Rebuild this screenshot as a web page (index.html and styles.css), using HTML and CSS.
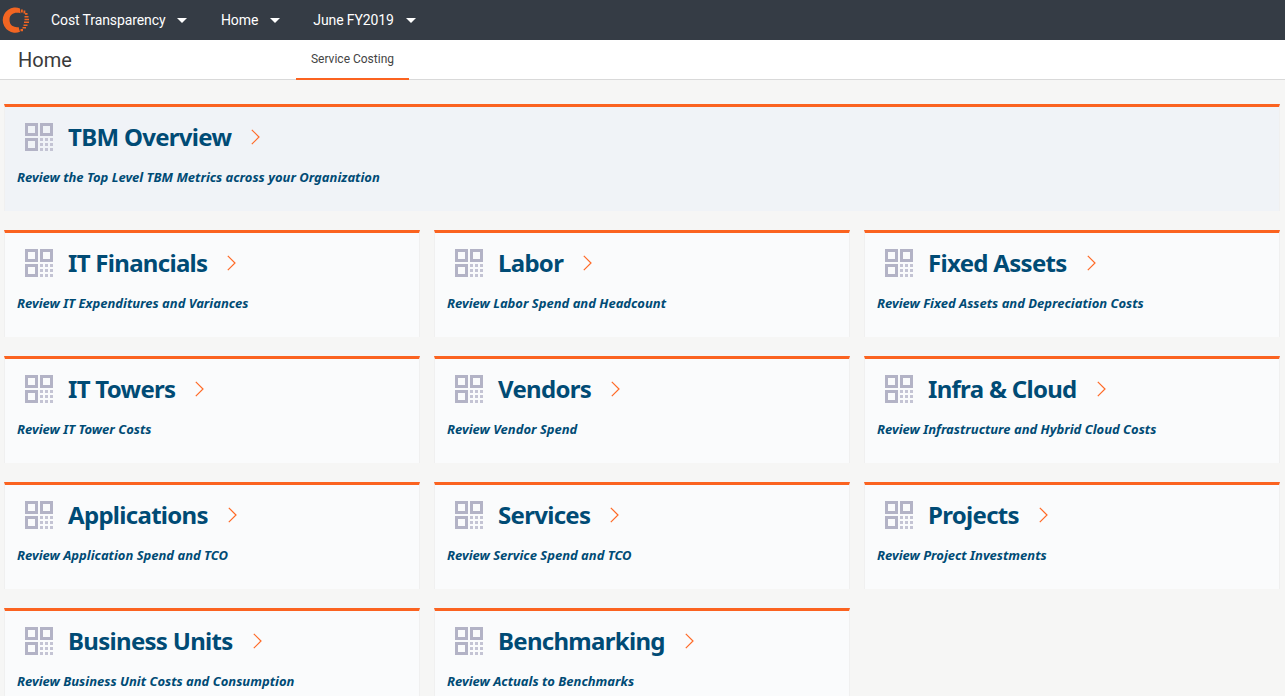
FILE: index.html
```html
<!DOCTYPE html>
<html lang="en">
<head>
<meta charset="utf-8">
<title>Home</title>
<link rel="stylesheet" href="styles.css">
</head>
<body>
<svg class="defs" width="0" height="0" aria-hidden="true">
  <symbol id="grid" viewBox="0 0 28 28">
    <path fill="#b3b3c6" fill-rule="evenodd" d="M0 0h13v13H0zM3 3v7h7V3zM15 0h13v13H15zM18 3v7h7V3zM0 15h13v13H0zM3 18v7h7v-7z"/>
    <path fill="#c4c4d4" d="M15 15h3v3h-3zM20 15h3v3h-3zM25 15h3v3h-3zM15 20h3v3h-3zM20 20h3v3h-3zM25 20h3v3h-3zM15 25h3v3h-3zM20 25h3v3h-3zM25 25h3v3h-3z"/>
  </symbol>
  <symbol id="chev" viewBox="0 0 9 16">
    <path fill="none" stroke="#ff6a26" stroke-width="1.200" d="M0.800 0.800l7.200 7.200-7.200 7.200"/>
  </symbol>
</svg>
<header class="topbar">
  <svg class="logo" viewBox="0 0 30 30" width="30" height="30" aria-hidden="true">
    <path fill="#f26522" d="M19 3.400A12.600 12.600 0 1 0 19 26.800L17.500 22C15 22.800 8.500 21.500 8.500 15S14 7 19.500 8.300z"/>
    <path fill="#f26522" d="M20 4.500h1.800v3H20zM22.500 5.500h1.800v3h-1.800zM24 8h2.500v1.800H24zM23.500 11h4v1.600h-4zM23.500 13.800h4.500v1.400h-4.500zM23 16.500h5v1.400h-5zM22.500 19.500h4v1.600h-4zM21.500 22h3.500v1.600h-3.500zM19.500 24h2.500v2.200h-2.500z"/>
  </svg>
  <nav class="mainnav">
    <a class="navitem navitem-a">Cost Transparency<i class="caret"></i></a>
    <a class="navitem navitem-b">Home<i class="caret"></i></a>
    <a class="navitem">June FY2019<i class="caret"></i></a>
  </nav>
</header>
<div class="subbar">
  <h1 class="pagetitle">Home</h1>
  <div class="tab">Service Costing</div>
</div>
<main class="content">
  <section class="card card-wide">
    <div class="cardhead"><svg class="gridicon"><use href="#grid"/></svg><h2>TBM Overview</h2><svg class="chev"><use href="#chev"/></svg></div>
    <p>Review the Top Level TBM Metrics across your Organization</p>
  </section>
  <section class="card">
    <div class="cardhead"><svg class="gridicon"><use href="#grid"/></svg><h2>IT Financials</h2><svg class="chev"><use href="#chev"/></svg></div>
    <p>Review IT Expenditures and Variances</p>
  </section>
  <section class="card">
    <div class="cardhead"><svg class="gridicon"><use href="#grid"/></svg><h2>Labor</h2><svg class="chev"><use href="#chev"/></svg></div>
    <p>Review Labor Spend and Headcount</p>
  </section>
  <section class="card">
    <div class="cardhead"><svg class="gridicon"><use href="#grid"/></svg><h2>Fixed Assets</h2><svg class="chev"><use href="#chev"/></svg></div>
    <p>Review Fixed Assets and Depreciation Costs</p>
  </section>
  <section class="card">
    <div class="cardhead"><svg class="gridicon"><use href="#grid"/></svg><h2>IT Towers</h2><svg class="chev"><use href="#chev"/></svg></div>
    <p>Review IT Tower Costs</p>
  </section>
  <section class="card">
    <div class="cardhead"><svg class="gridicon"><use href="#grid"/></svg><h2>Vendors</h2><svg class="chev"><use href="#chev"/></svg></div>
    <p>Review Vendor Spend</p>
  </section>
  <section class="card">
    <div class="cardhead"><svg class="gridicon"><use href="#grid"/></svg><h2>Infra &amp; Cloud</h2><svg class="chev"><use href="#chev"/></svg></div>
    <p>Review Infrastructure and Hybrid Cloud Costs</p>
  </section>
  <section class="card">
    <div class="cardhead"><svg class="gridicon"><use href="#grid"/></svg><h2>Applications</h2><svg class="chev"><use href="#chev"/></svg></div>
    <p>Review Application Spend and TCO</p>
  </section>
  <section class="card">
    <div class="cardhead"><svg class="gridicon"><use href="#grid"/></svg><h2>Services</h2><svg class="chev"><use href="#chev"/></svg></div>
    <p>Review Service Spend and TCO</p>
  </section>
  <section class="card">
    <div class="cardhead"><svg class="gridicon"><use href="#grid"/></svg><h2>Projects</h2><svg class="chev"><use href="#chev"/></svg></div>
    <p>Review Project Investments</p>
  </section>
  <section class="card">
    <div class="cardhead"><svg class="gridicon"><use href="#grid"/></svg><h2>Business Units</h2><svg class="chev"><use href="#chev"/></svg></div>
    <p>Review Business Unit Costs and Consumption</p>
  </section>
  <section class="card">
    <div class="cardhead"><svg class="gridicon"><use href="#grid"/></svg><h2>Benchmarking</h2><svg class="chev"><use href="#chev"/></svg></div>
    <p>Review Actuals to Benchmarks</p>
  </section>
</main>
</body>
</html>
```
FILE: styles.css
```css
* { box-sizing: border-box; }
html, body { margin: 0; height: 100%; overflow: hidden; }
body { background: #f6f6f5; font-family: Roboto, sans-serif; }
.defs { display: block; height: 0; }
.topbar { height: 40px; background: #353c45; display: flex; align-items: center; padding: 0 0 0 1px; }
.logo { flex: none; }
.mainnav { display: flex; margin-left: 20px; margin-bottom: 1px; }
.navitem { color: #fff; font-size: 14px; letter-spacing: -0.1px; display: flex; align-items: center; }
.navitem-a { margin-right: 33.5px; }
.navitem-b { margin-right: 33px; }
.caret { width: 0; height: 0; margin-left: 12px; margin-top: 1px; border-left: 5px solid transparent; border-right: 5px solid transparent; border-top: 5px solid #fff; }
.subbar { height: 40px; background: #fff; border-bottom: 1px solid #d9d9d9; display: flex; }
.pagetitle { margin: 0; width: 296px; padding-left: 18px; font-size: 20px; font-weight: 400; line-height: 40px; color: #3a3a3a; }
.tab { width: 113px; height: 40px; text-align: center; font-size: 12px; line-height: 39px; color: #444; border-bottom: 2px solid #fb6320; }
.content { display: grid; grid-template-columns: repeat(3, 416px); column-gap: 14px; row-gap: 19px; padding: 24px 0 0 4px; }
.card { height: 107px; background: #fafbfc; border-top: 3px solid #fb6320; border-left: 1px solid #f0f0f0; border-right: 1px solid #f0f0f0; padding: 0 0 0 12px; font-family: "Noto Sans", sans-serif; color: #004b75; }
.card-wide { grid-column: 1 / -1; background: #f0f3f7; }
.cardhead { display: flex; align-items: center; height: 30px; margin-top: 15px; margin-left: 8px; }
.gridicon { width: 28px; height: 28px; flex: none; }
.cardhead h2 { margin: 0 0 0 15px; font-size: 24px; font-weight: 700; line-height: 30px; letter-spacing: -0.7px; }
.chev { width: 9px; height: 16px; margin-left: 20px; flex: none; }
.card p { margin: 16px 0 0; font-size: 13px; font-weight: 700; font-style: italic; line-height: 18px; }
```
